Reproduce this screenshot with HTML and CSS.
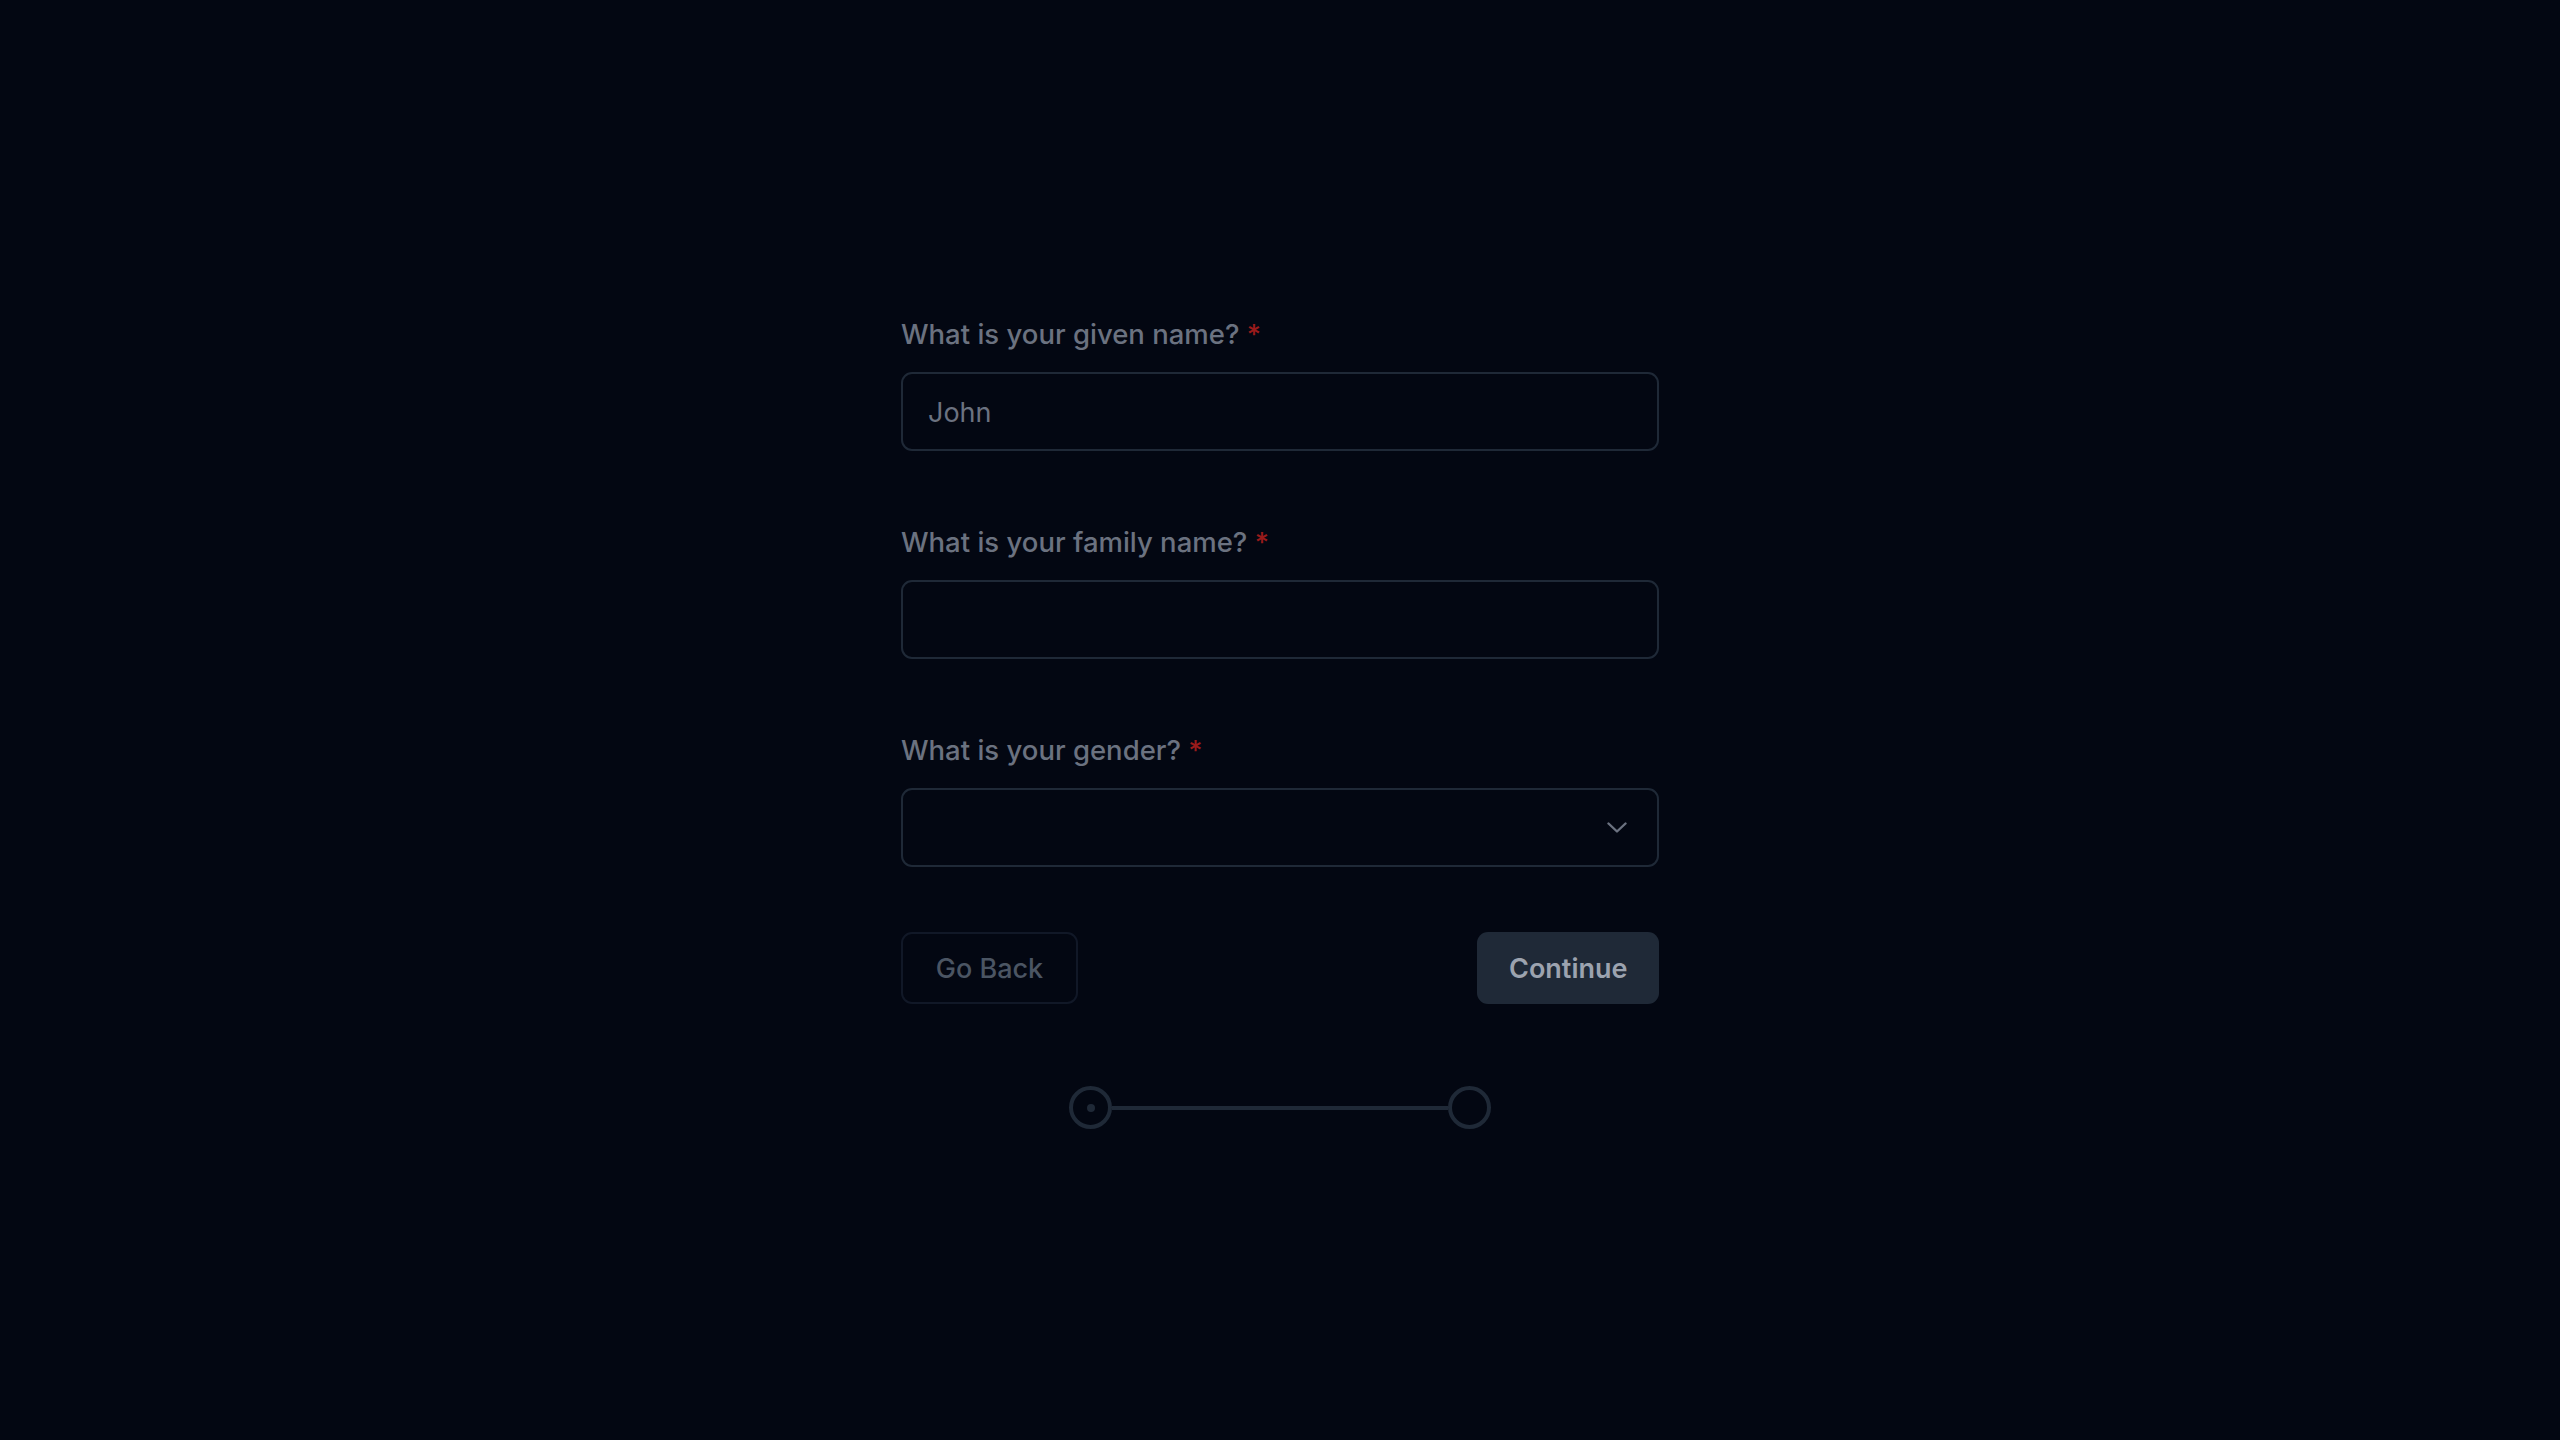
FILE: index.html
```html
<!DOCTYPE html>
<html lang="en">
<head>
<meta charset="utf-8">
<title>Form</title>
<link rel="stylesheet" href="styles.css">
</head>
<body>
<main class="page">
  <form class="form">
    <div class="field">
      <label class="label" for="given">What is your given name? <span class="req">*</span></label>
      <input class="input" id="given" type="text" placeholder="John">
    </div>
    <div class="field">
      <label class="label" for="family">What is your family name? <span class="req">*</span></label>
      <input class="input" id="family" type="text">
    </div>
    <div class="field">
      <label class="label" for="gender">What is your gender? <span class="req">*</span></label>
      <div class="select-wrap">
        <select class="input select" id="gender">
          <option value=""></option>
          <option>Male</option>
          <option>Female</option>
        </select>
        <svg class="chevron" viewBox="0 0 20 11" width="20" height="11" aria-hidden="true">
          <path d="M1.5 1.5 L10 9.5 L18.5 1.5" fill="none" stroke="#6b7280" stroke-width="2.4" stroke-linecap="round" stroke-linejoin="round"/>
        </svg>
      </div>
    </div>
    <div class="actions">
      <button type="button" class="btn btn-back">Go Back</button>
      <button type="button" class="btn btn-continue">Continue</button>
    </div>
    <div class="stepper">
      <span class="step step-current"><span class="dot"></span></span>
      <span class="track"></span>
      <span class="step"></span>
    </div>
  </form>
</main>
</body>
</html>
```
FILE: styles.css
```css
* { box-sizing: border-box; }

html, body {
  margin: 0;
  padding: 0;
  background: #030712;
  height: 100%;
}

body {
  font-family: Inter, "Liberation Sans", sans-serif;
  color: #6b7280;
}

.page {
  padding-top: 313px;
}

.form {
  width: 758px;
  margin: 0 auto;
  display: flex;
  flex-direction: column;
}

.field {
  display: flex;
  flex-direction: column;
  margin-bottom: 70px;
}

.field:nth-child(3) {
  margin-bottom: 65px;
}

.label {
  display: block;
  font-size: 27.5px;
  font-weight: 500;
  line-height: 42px;
  color: #6b7280;
  margin-bottom: 17px;
}

.req {
  color: #991b1b;
}

.input {
  width: 100%;
  height: 79px;
  background: #030712;
  border: 2px solid #1f2937;
  border-radius: 11px;
  padding: 2px 25px 0;
  font-family: inherit;
  font-size: 27px;
  color: #9ca3af;
  outline: none;
}

.input::placeholder {
  color: #6b7280;
}

.select-wrap {
  position: relative;
}

.select {
  appearance: none;
  -webkit-appearance: none;
}

.chevron {
  position: absolute;
  right: 32px;
  top: 34px;
  pointer-events: none;
}

.actions {
  display: flex;
  justify-content: space-between;
  align-items: center;
}

.btn {
  height: 72px;
  padding: 0 32px;
  border-radius: 11px;
  font-family: inherit;
  font-size: 27px;
  font-weight: 500;
  cursor: pointer;
}

.btn-back {
  width: 177px;
  background: transparent;
  border: 2px solid #111827;
  color: #4b5563;
}

.btn-continue {
  width: 182px;
  background: #1f2937;
  border: none;
  color: #9ca3af;
  font-weight: 600;
}

.stepper {
  margin: 82px auto 0;
  width: 422px;
  display: flex;
  align-items: center;
}

.step {
  width: 43px;
  height: 43px;
  border: 4px solid #1f2937;
  border-radius: 50%;
  display: flex;
  align-items: center;
  justify-content: center;
  flex: none;
}

.dot {
  width: 8px;
  height: 8px;
  border-radius: 50%;
  background: #1f2937;
}

.track {
  flex: 1;
  height: 4px;
  background: #1f2937;
}
```
